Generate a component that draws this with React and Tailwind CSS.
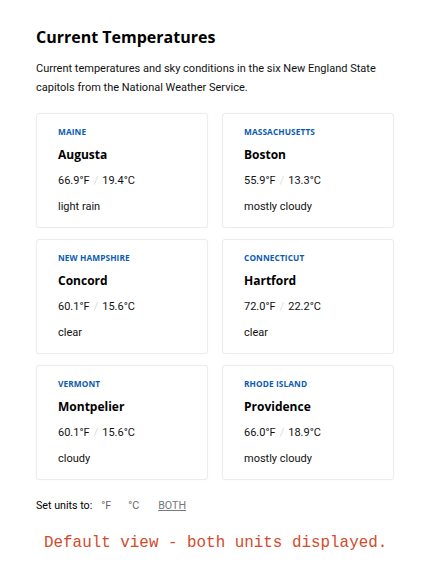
const cities = [
  { state: "MAINE", city: "Augusta", f: "66.9", c: "19.4", sky: "light rain" },
  { state: "MASSACHUSETTS", city: "Boston", f: "55.9", c: "13.3", sky: "mostly cloudy" },
  { state: "NEW HAMPSHIRE", city: "Concord", f: "60.1", c: "15.6", sky: "clear" },
  { state: "CONNECTICUT", city: "Hartford", f: "72.0", c: "22.2", sky: "clear" },
  { state: "VERMONT", city: "Montpelier", f: "60.1", c: "15.6", sky: "cloudy" },
  { state: "RHODE ISLAND", city: "Providence", f: "66.0", c: "18.9", sky: "mostly cloudy" },
];

function CityCard({ state, city, f, c, sky }) {
  return (
    <div className="h-[115px] border border-[#ececec] rounded-[3px] bg-white pl-[21px] pt-[11px] shadow-[0_0_2px_rgba(0,0,0,0.04)]">
      <div className="text-[8.3px] font-bold tracking-[0.1px] text-[#0b5cb0] leading-[14px] font-['Open_Sans',sans-serif]">
        {state}
      </div>
      <div className="mt-[7px] text-[12px] font-bold text-black leading-[18px] font-['Open_Sans',sans-serif]">
        {city}
      </div>
      <div className="mt-[8px] text-[11px] text-[#111] leading-[18px] font-['Roboto',sans-serif]">
        {f}°F<span className="text-[#dcdcdc] mx-[4px]">/</span>{c}°C
      </div>
      <div className="mt-[8px] text-[11px] text-[#111] leading-[18px] font-['Roboto',sans-serif]">
        {sky}
      </div>
    </div>
  );
}

export default function App() {
  return (
    <div className="w-[430px] h-[580px] bg-white pl-[36px] pr-[36px] pt-[25px] overflow-hidden">
      <h1 className="text-[16px] font-bold text-black leading-[24px] font-['Open_Sans',sans-serif]">
        Current Temperatures
      </h1>
      <p className="mt-[10px] text-[11px] leading-[19px] text-[#111] font-['Roboto',sans-serif] w-[340px]">
        Current temperatures and sky conditions in the six New England State capitols from the National Weather Service.
      </p>

      <div className="mt-[16px] grid grid-cols-2 gap-x-[14px] gap-y-[11px] w-[358px]">
        {cities.map((c) => (
          <CityCard key={c.city} {...c} />
        ))}
      </div>

      <div className="mt-[18px] flex items-center text-[10.7px] font-['Roboto',sans-serif] leading-[16px]">
        <span className="text-black">Set units to:</span>
        <span className="ml-[9px] text-[#666]">°F</span>
        <span className="ml-[17px] text-[#666]">°C</span>
        <span className="ml-[19px] text-[#777] underline">BOTH</span>
      </div>

      <div className="mt-[19px] ml-[8px] text-[15.9px] text-[#d24a2c] font-['Liberation_Mono',monospace] leading-[20px]">
        Default view - both units displayed.
      </div>
    </div>
  );
}
